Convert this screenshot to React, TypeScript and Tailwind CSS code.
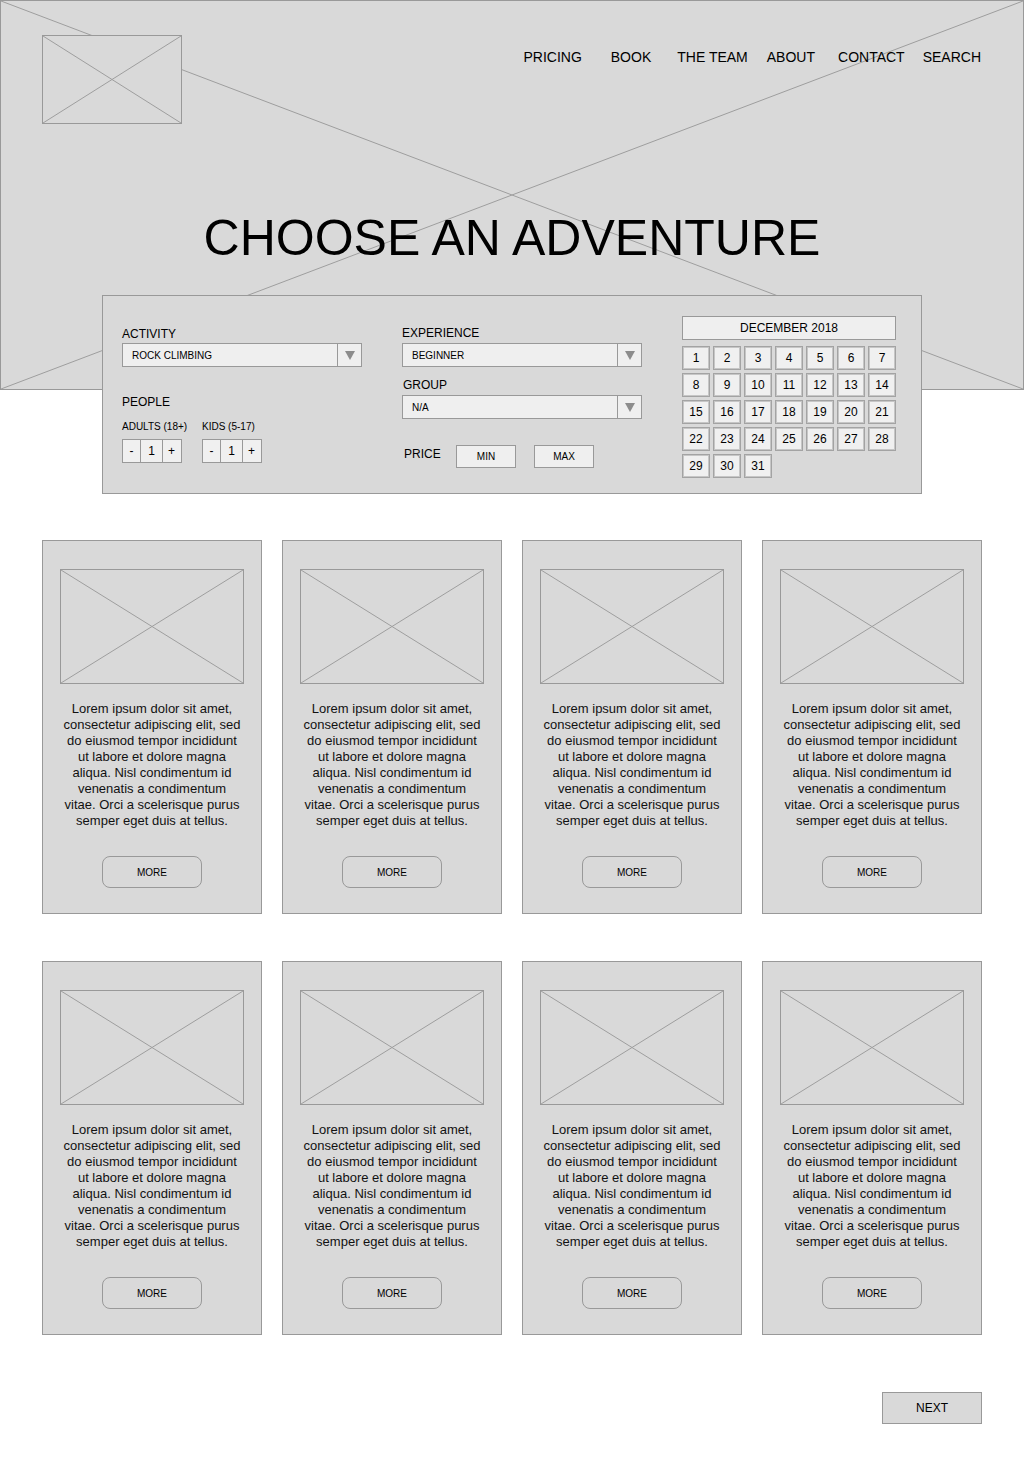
import React from "react";

const navItems = [
  { label: "PRICING", cls: "" },
  { label: "BOOK", cls: "ml-[29px]" },
  { label: "THE TEAM", cls: "ml-[26px]" },
  { label: "ABOUT", cls: "ml-[19px]" },
  { label: "CONTACT", cls: "ml-[23px]" },
  { label: "SEARCH", cls: "ml-[18px]" },
];

const loremLines = [
  "Lorem ipsum dolor sit amet,",
  "consectetur adipiscing elit, sed",
  "do eiusmod tempor incididunt",
  "ut labore et dolore magna",
  "aliqua. Nisl condimentum id",
  "venenatis a condimentum",
  "vitae. Orci a scelerisque purus",
  "semper eget duis at tellus.",
];

const days = Array.from({ length: 31 }, (_, i) => i + 1);

// X drawn across a placeholder box
const Cross = () => (
  <svg className="absolute inset-0 h-full w-full" preserveAspectRatio="none">
    <line x1="0" y1="0" x2="100%" y2="100%" stroke="#9e9e9e" strokeWidth="1" />
    <line x1="100%" y1="0" x2="0" y2="100%" stroke="#9e9e9e" strokeWidth="1" />
  </svg>
);

const Select = ({ value }: { value: string }) => (
  <div className="flex h-[24px] w-[240px] border border-[#999] bg-[#efefef]">
    <div className="flex flex-1 items-center pl-[9px] text-[10px]">{value}</div>
    <div className="flex w-[24px] items-center justify-center border-l border-[#999]">
      <svg width="10" height="9" viewBox="0 0 10 9">
        <polygon points="0,0 10,0 5,9" fill="#8c8c8c" />
      </svg>
    </div>
  </div>
);

const Stepper = () => (
  <div className="flex h-[24px] w-[60px] border border-[#999] bg-[#f0f0f0] text-[12px]">
    <div className="flex w-[17px] items-center justify-center">-</div>
    <div className="flex w-[23px] items-center justify-center border-x border-[#999]">1</div>
    <div className="flex w-[17px] items-center justify-center">+</div>
  </div>
);

const Card = () => (
  <div className="flex h-[374px] w-[220px] flex-col items-center border border-[#999] bg-[#d9d9d9] pt-[28px]">
    <div className="relative h-[115px] w-[184px] border border-[#999]">
      <Cross />
    </div>
    <p className="mt-[17px] text-center text-[13px] leading-[16px] text-[#111]">
      {loremLines.map((l, i) => (
        <React.Fragment key={i}>
          {l}
          {i < loremLines.length - 1 && <br />}
        </React.Fragment>
      ))}
    </p>
    <button className="mt-[27px] h-[32px] w-[100px] rounded-[8px] border border-[#999] text-[10px]">
      MORE
    </button>
  </div>
);

export default function App() {
  return (
    <div className="min-h-[1468px] w-[1024px] bg-white font-['Liberation_Sans',Arial,Helvetica,sans-serif] text-black">
      {/* Hero */}
      <div className="relative h-[390px] w-[1024px] border border-[#999] bg-[#d9d9d9]">
        <Cross />
        <div className="relative flex items-start">
          <div className="relative ml-[41px] mt-[34px] h-[89px] w-[140px] border border-[#999] bg-[#d9d9d9]">
            <Cross />
          </div>
          <nav className="ml-auto mr-[42px] mt-[48px] flex text-[14px] leading-[16px]">
            {navItems.map((n) => (
              <span key={n.label} className={n.cls}>
                {n.label}
              </span>
            ))}
          </nav>
        </div>
        <h1 className="relative mt-[86px] text-center text-[50px] leading-[56px]">
          CHOOSE AN ADVENTURE
        </h1>
      </div>

      {/* Filters */}
      <div className="relative z-10 ml-[102px] mt-[-95px] flex h-[199px] w-[820px] border border-[#999] bg-[#d9d9d9] pl-[19px]">
        <div className="flex w-[240px] flex-col pt-[31px]">
          <div className="text-[12px] leading-[14px]">ACTIVITY</div>
          <div className="mt-[2px]">
            <Select value="ROCK CLIMBING" />
          </div>
          <div className="mt-[28px] text-[12px] leading-[14px]">PEOPLE</div>
          <div className="mt-[12px] flex">
            <div className="w-[60px]">
              <div className="whitespace-nowrap text-[10px] leading-[12px]">ADULTS (18+)</div>
              <div className="mt-[6px]">
                <Stepper />
              </div>
            </div>
            <div className="ml-[20px] w-[60px]">
              <div className="whitespace-nowrap text-[10px] leading-[12px]">KIDS (5-17)</div>
              <div className="mt-[6px]">
                <Stepper />
              </div>
            </div>
          </div>
        </div>

        <div className="ml-[40px] flex w-[240px] flex-col pt-[30px]">
          <div className="text-[12px] leading-[14px]">EXPERIENCE</div>
          <div className="mt-[3px]">
            <Select value="BEGINNER" />
          </div>
          <div className="mt-[11px] pl-[1px] text-[12px] leading-[14px]">GROUP</div>
          <div className="mt-[3px]">
            <Select value="N/A" />
          </div>
          <div className="mt-[26px] flex items-start">
            <div className="mt-[2px] w-[54px] pl-[2px] text-[12px] leading-[14px]">PRICE</div>
            <div className="flex h-[23px] w-[60px] items-center justify-center border border-[#999] bg-[#efefef] text-[10px]">
              MIN
            </div>
            <div className="ml-[18px] flex h-[23px] w-[60px] items-center justify-center border border-[#999] bg-[#efefef] text-[10px]">
              MAX
            </div>
          </div>
        </div>

        <div className="ml-[40px] flex w-[214px] flex-col pt-[20px]">
          <div className="flex h-[24px] items-center justify-center border border-[#999] bg-[#efefef] text-[12px]">
            DECEMBER 2018
          </div>
          <div className="mt-[6px] grid grid-cols-[repeat(7,28px)] gap-[3px]">
            {days.map((d) => (
              <div
                key={d}
                className="flex h-[24px] items-center justify-center border border-[#a3a3a3] bg-[#f0f0f0] text-[12px] shadow-[inset_0_0_0_1px_#c6c6c6]"
              >
                {d}
              </div>
            ))}
          </div>
        </div>
      </div>

      {/* Cards */}
      <div className="ml-[42px] mt-[46px] grid w-[940px] grid-cols-4 gap-x-[20px] gap-y-[47px]">
        {Array.from({ length: 8 }).map((_, i) => (
          <Card key={i} />
        ))}
      </div>

      <div className="mr-[42px] mt-[57px] flex justify-end">
        <button className="h-[32px] w-[100px] border border-[#999] bg-[#d9d9d9] text-[12px]">
          NEXT
        </button>
      </div>
    </div>
  );
}
